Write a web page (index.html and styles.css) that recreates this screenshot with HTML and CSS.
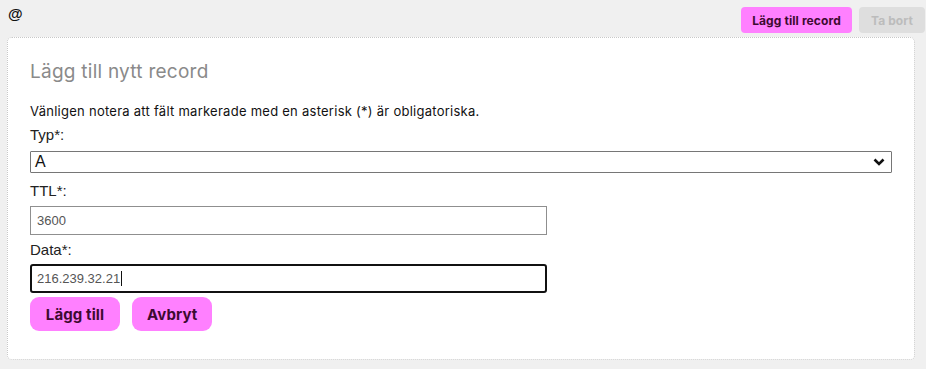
FILE: index.html
```html
<!DOCTYPE html>
<html lang="sv">
<head>
<meta charset="utf-8">
<link rel="stylesheet" href="styles.css">
</head>
<body>
<div class="topbar">
  <span class="at">@</span>
  <div class="actions">
    <button class="btn btn-sm">Lägg till record</button>
    <button class="btn btn-sm btn-disabled" disabled>Ta bort</button>
  </div>
</div>
<div class="card">
  <h2 class="title">Lägg till nytt record</h2>
  <p class="note">Vänligen notera att fält markerade med en asterisk (*) är obligatoriska.</p>
  <label class="label">Typ*:</label>
  <div class="select">
    <span>A</span>
    <svg class="chev" width="12" height="8" viewBox="0 0 12 8"><path d="M1.5 1.5 L6 6 L10.5 1.5" fill="none" stroke="#111" stroke-width="2.6"/></svg>
  </div>
  <label class="label">TTL*:</label>
  <div class="input">3600</div>
  <label class="label">Data*:</label>
  <div class="input focused">216.239.32.21<span class="caret"></span></div>
  <div class="buttons">
    <button class="btn btn-lg">Lägg till</button>
    <button class="btn btn-lg">Avbryt</button>
  </div>
</div>
</body>
</html>
```
FILE: styles.css
```css
* { box-sizing: border-box; }
html, body { margin: 0; padding: 0; }
body {
  background: #f0f0f0;
  width: 926px;
  height: 369px;
  overflow: hidden;
  font-family: Inter, "Liberation Sans", sans-serif;
}
.topbar {
  display: flex;
  justify-content: space-between;
  align-items: flex-start;
  padding: 7px 1px 0 8px;
  height: 37px;
}
.at {
  font-family: "Liberation Sans", sans-serif;
  font-weight: bold;
  font-size: 15px;
  color: #111;
  line-height: 14px;
}
.actions { display: flex; gap: 7px; }
.btn {
  font-family: Inter, sans-serif;
  font-weight: 700;
  border: none;
  background: #ff80ff;
  color: #3d0a30;
  cursor: pointer;
  letter-spacing: 0.1px;
}
.btn-sm {
  height: 26px;
  font-size: 12px;
  border-radius: 4px;
  padding: 0 8px;
}
.btn-sm:first-child { width: 111px; }
.btn-disabled {
  background: #dedede;
  color: #bcbcbc;
  width: 66px;
}
.card {
  margin: 0 11px 0 7px;
  height: 323px;
  background: #fff;
  border: 1px dotted #c8c8c8;
  border-radius: 5px;
  padding: 22px 22px 0 22px;
  display: flex;
  flex-direction: column;
  align-items: flex-start;
}
.title {
  margin: 0;
  font-weight: 400;
  font-size: 19px;
  letter-spacing: 0.25px;
  color: #8a8a8a;
  line-height: 24px;
}
.note {
  margin: 19px 0 0 0;
  font-size: 13px;
  letter-spacing: 0.26px;
  color: #111;
  line-height: 16px;
}
.label {
  font-family: "Liberation Sans", sans-serif;
  font-size: 15px;
  color: #222;
  line-height: 17px;
  margin-top: 7px;
}
.select {
  margin-top: 8px;
  width: 862px;
  height: 22px;
  border: 1px solid #767676;
  border-radius: 1px;
  display: flex;
  align-items: center;
  justify-content: space-between;
  padding: 0 6px 0 4px;
  font-family: "Liberation Sans", sans-serif;
  font-size: 16px;
  color: #111;
}
.select + .label { margin-top: 9px; }
.input {
  margin-top: 7px;
  width: 517px;
  height: 29px;
  border: 1px solid #8f8f8f;
  display: flex;
  align-items: center;
  padding: 0 6px;
  font-family: "Liberation Sans", sans-serif;
  font-size: 13px;
  color: #555;
}
.input + .label { margin-top: 6px; }
.input.focused {
  margin-top: 6px;
  border: 2px solid #111;
  border-radius: 3px;
  padding: 0 5px;
}
.caret {
  display: inline-block;
  width: 1px;
  height: 15px;
  background: #111;
  margin-left: 1px;
}
.buttons {
  display: flex;
  gap: 12px;
  margin-top: 4px;
}
.btn-lg {
  height: 34px;
  border-radius: 9px;
  font-size: 15px;
  padding: 0 15px;
}
.btn-lg:first-child { width: 90px; }
.btn-lg:last-child { width: 80px; }
```
